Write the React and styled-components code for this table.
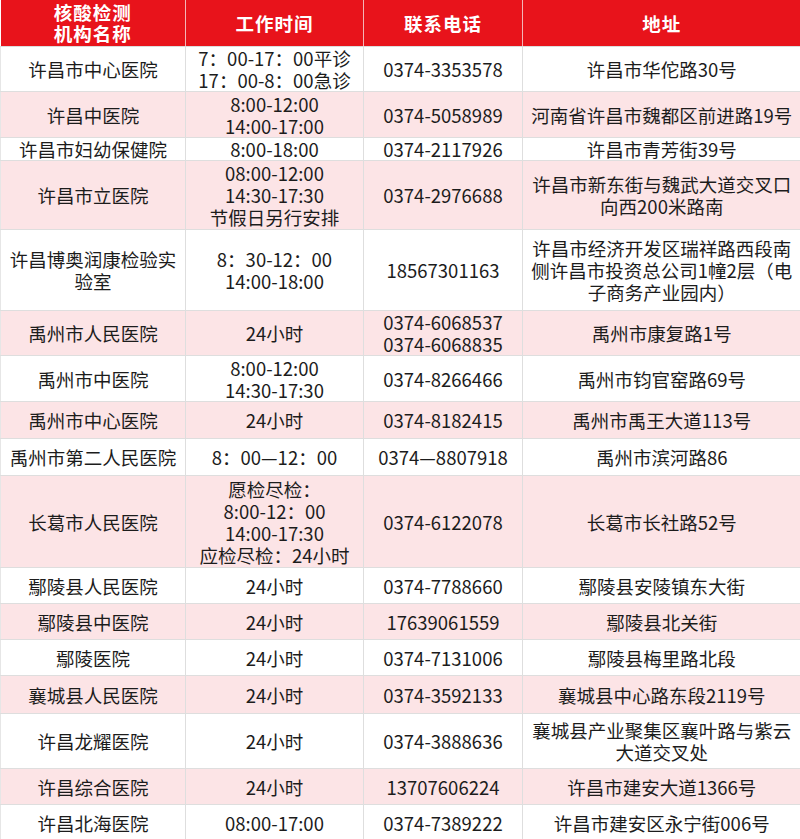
import React from 'react';
import styled, { createGlobalStyle } from 'styled-components';

const GlobalStyle = createGlobalStyle`
  html, body {
    margin: 0;
    padding: 0;
    background: #ffffff;
  }
  body {
    font-family: "Noto Sans CJK SC", "Noto Sans", sans-serif;
    color: #1c1c1c;
  }
`;

const Table = styled.table`
  width: 800px;
  border-collapse: collapse;
  table-layout: fixed;
`;

const HeadCell = styled.th`
  background: #e8131b;
  color: #ffffff;
  font-weight: 700;
  font-size: 18.5px;
  line-height: 21px;
  height: 46px;
  padding: 0;
  text-align: center;
  vertical-align: middle;
  border-left: 1px solid #f3b5b7;
  border-right: 1px solid #f3b5b7;
  border-bottom: 1px solid #dcdcdc;
  &:first-child { border-left: none; }
  &:last-child { border-right: none; }
`;

const Row = styled.tr`
  height: ${p => p.$h}px;
  background: ${p => (p.$pink ? '#fce4e6' : '#ffffff')};
`;

const Cell = styled.td`
  padding: 0 2px;
  text-align: center;
  vertical-align: middle;
  font-size: 18.5px;
  line-height: 22px;
  border: 1px solid #dedede;
  &:first-child { border-left: 1px solid #e6e6e6; }
  &:last-child { border-right: none; }
`;

const Line = styled.div`
  white-space: nowrap;
  letter-spacing: ${p => p.$ls || 0}px;
`;

const rows = [
  { h: 45, name: ['许昌市中心医院'], time: ['7：00-17：00平诊', '17：00-8：00急诊'], tel: ['0374-3353578'], addr: ['许昌市华佗路30号'] },
  { h: 46, pink: true, name: ['许昌中医院'], time: ['8:00-12:00', '14:00-17:00'], tel: ['0374-5058989'], addr: ['河南省许昌市魏都区前进路19号'] },
  { h: 22, name: ['许昌市妇幼保健院'], time: ['8:00-18:00'], tel: ['0374-2117926'], addr: ['许昌市青芳街39号'] },
  { h: 69, pink: true, name: ['许昌市立医院'], time: ['08:00-12:00', '14:30-17:30', '节假日另行安排'], tel: ['0374-2976688'], addr: ['许昌市新东街与魏武大道交叉口', '向西200米路南'] },
  { h: 81, name: ['许昌博奥润康检验实', '验室'], time: ['8：30-12：00', '14:00-18:00'], tel: ['18567301163'], addr: ['许昌市经济开发区瑞祥路西段南', '侧许昌市投资总公司1幢2层（电', '子商务产业园内）'] },
  { h: 45, pink: true, name: ['禹州市人民医院'], time: ['24小时'], tel: ['0374-6068537', '0374-6068835'], addr: ['禹州市康复路1号'] },
  { h: 46, name: ['禹州市中医院'], time: ['8:00-12:00', '14:30-17:30'], tel: ['0374-8266466'], addr: ['禹州市钧官窑路69号'] },
  { h: 37, pink: true, name: ['禹州市中心医院'], time: ['24小时'], tel: ['0374-8182415'], addr: ['禹州市禹王大道113号'] },
  { h: 37, name: ['禹州市第二人民医院'], time: ['8：00—12：00'], tel: ['0374—8807918'], addr: ['禹州市滨河路86'] },
  { h: 92, pink: true, name: ['长葛市人民医院'], time: ['愿检尽检：', '8:00-12：00', '14:00-17:30', '应检尽检：24小时'], tel: ['0374-6122078'], addr: ['长葛市长社路52号'] },
  { h: 36, name: ['鄢陵县人民医院'], time: ['24小时'], tel: ['0374-7788660'], addr: ['鄢陵县安陵镇东大街'] },
  { h: 36, pink: true, name: ['鄢陵县中医院'], time: ['24小时'], tel: ['17639061559'], addr: ['鄢陵县北关街'] },
  { h: 36, name: ['鄢陵医院'], time: ['24小时'], tel: ['0374-7131006'], addr: ['鄢陵县梅里路北段'] },
  { h: 38, pink: true, name: ['襄城县人民医院'], time: ['24小时'], tel: ['0374-3592133'], addr: ['襄城县中心路东段2119号'] },
  { h: 55, name: ['许昌龙耀医院'], time: ['24小时'], tel: ['0374-3888636'], addr: ['襄城县产业聚集区襄叶路与紫云', '大道交叉处'] },
  { h: 36, pink: true, name: ['许昌综合医院'], time: ['24小时'], tel: ['13707606224'], addr: ['许昌市建安大道1366号'] },
  { h: 36, name: ['许昌北海医院'], time: ['08:00-17:00'], tel: ['0374-7389222'], addr: ['许昌市建安区永宁街006号'] },
];

const Lines = ({ items, ls }) => items.map((t, i) => <Line key={i} $ls={ls}>{t}</Line>);

export default function App() {
  return (
    <>
      <GlobalStyle />
      <Table>
        <colgroup>
          <col style={{ width: 185 }} />
          <col style={{ width: 178 }} />
          <col style={{ width: 159 }} />
          <col style={{ width: 278 }} />
        </colgroup>
        <thead>
          <tr>
            <HeadCell>
              <Line $ls={1}>核酸检测</Line>
              <Line $ls={1}>机构名称</Line>
            </HeadCell>
            <HeadCell><Line $ls={1}>工作时间</Line></HeadCell>
            <HeadCell><Line $ls={1}>联系电话</Line></HeadCell>
            <HeadCell><Line $ls={1}>地址</Line></HeadCell>
          </tr>
        </thead>
        <tbody>
          {rows.map((r, i) => (
            <Row key={i} $h={r.h} $pink={r.pink}>
              <Cell><Lines items={r.name} /></Cell>
              <Cell><Lines items={r.time} /></Cell>
              <Cell><Lines items={r.tel} /></Cell>
              <Cell><Lines items={r.addr} /></Cell>
            </Row>
          ))}
        </tbody>
      </Table>
    </>
  );
}
